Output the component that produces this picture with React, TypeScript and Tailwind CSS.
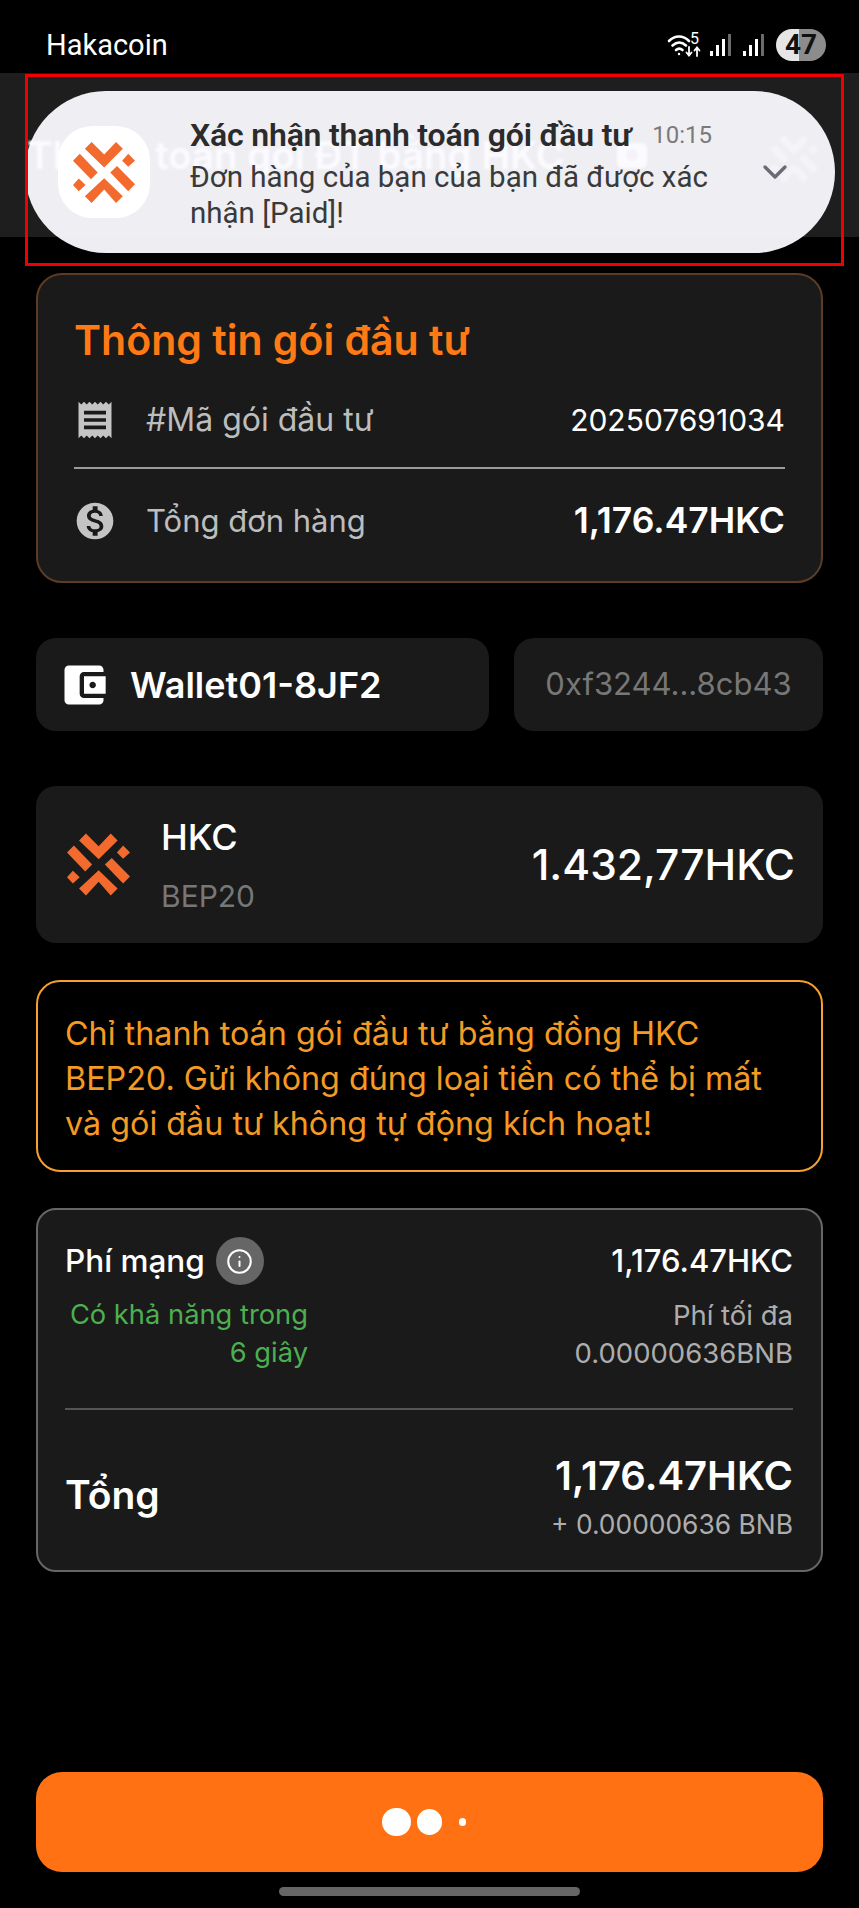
import { ChevronDown, Info } from 'lucide-react'
import { MdAccountBalanceWallet, MdMonetizationOn, MdReceipt } from 'react-icons/md'

function HkcLogo({ className }: { className?: string }) {
  return (
    <svg viewBox="95 105 183 180" className={className} fill="currentColor">
      <polygon points="130,125 150,105 187,142 222,105 242,125 187,180" />
      <polygon points="130,265 187,212 242,265 222,285 187,245 150,285" />
      <polygon points="95,160 115,140 168,195 148,215" />
      <polygon points="205,195 225,176 278,230 258,250" />
      <polygon points="240,160 258,140 278,160 258,178" />
      <polygon points="95,232 112,213 132,232 112,250" />
    </svg>
  )
}

function SignalBars() {
  return (
    <svg width="21" height="22" viewBox="0 0 21 22">
      <rect x="0" y="17" width="3" height="5" fill="#fff" />
      <rect x="6" y="11" width="3" height="11" fill="#fff" />
      <rect x="12" y="5" width="3" height="17" fill="#fff" />
      <rect x="18" y="0" width="3" height="22" fill="#6b6b6b" />
    </svg>
  )
}

function StatusBar() {
  return (
    <div className="h-[73px] flex items-center justify-between pl-[46px] pr-[33px] pt-[17px] bg-black">
      <span className="font-['Roboto',sans-serif] text-[29px] leading-[32px] text-white">Hakacoin</span>
      <div className="flex items-center">
        <svg width="34" height="26" viewBox="0 0 34 26" fill="none" stroke="#fff" strokeWidth="2.6" strokeLinecap="round" className="overflow-visible">
          <path d="M1 9C7 3 15 3 21 9" />
          <path d="M4.5 13.500C9 9.500 13.500 9.500 18 13.500" />
          <path d="M8 18C10 16.200 12.500 16.200 14.500 18" />
          <circle cx="11" cy="22" r="1.200" fill="#fff" stroke="none" />
          <text x="22" y="12" fontSize="16" fill="#fff" stroke="none" fontFamily="Roboto, sans-serif">5</text>
          <path d="M21 15V23M18.500 20.500L21 23.500L23.500 20.500" strokeWidth="1.800" />
          <path d="M29 24V16M26.500 18.500L29 15.500L31.500 18.500" strokeWidth="1.800" />
        </svg>
        <div className="ml-[8px]"><SignalBars /></div>
        <div className="ml-[12px]"><SignalBars /></div>
        <div className="ml-[12px] relative w-[50px] h-[32px] rounded-full overflow-hidden flex">
          <div className="w-[23px] bg-[#e6e6e6]" />
          <div className="flex-1 bg-[#8c8c8c]" />
          <span className="absolute inset-0 flex items-center justify-center font-['Roboto',sans-serif] font-bold text-[28px] leading-none text-[#111]">47</span>
        </div>
      </div>
    </div>
  )
}

function NotificationPill() {
  return (
    <div className="absolute left-[25px] top-[91px] w-[810px] h-[162px] rounded-[81px] bg-[#fafaff]/95 flex items-center font-['Roboto',sans-serif]">
      <div className="ml-[33px] w-[92px] h-[92px] rounded-[34px] bg-white flex items-center justify-center">
        <HkcLogo className="w-[62px] h-[61px] text-[#f26a2e]" />
      </div>
      <div className="ml-[40px] mt-[4px] w-[530px]">
        <div className="w-[522px] flex items-center justify-between">
          <span className="text-[32px] leading-[36px] tracking-[-0.2px] font-semibold text-[#2b2b2b]">Xác nhận thanh toán gói đầu tư</span>
          <span className="text-[24px] leading-[36px] text-[#7a7a7a]">10:15</span>
        </div>
        <p className="mt-[6px] text-[29.5px] leading-[36px] text-[#3a3a3a]">Đơn hàng của bạn của bạn đã được xác nhận [Paid]!</p>
      </div>
      <ChevronDown size={40} strokeWidth={2} className="ml-[35px] text-[#6b6b76]" />
    </div>
  )
}

export default function App() {
  return (
    <div className="relative w-[859px] h-[1908px] overflow-hidden bg-black text-white font-['Inter',sans-serif]">
      <StatusBar />

      {/* header sitting behind the notification */}
      <div className="h-[164px] bg-[#1e1e1e] flex items-center justify-between pl-[27px] pr-[40px]">
        <div className="flex items-center gap-[53px] blur-[1px]">
          <span className="text-[38.500px] leading-[48px] font-semibold">Thanh toán gói ĐT bằng HKC</span>
          <span className="w-[30px] h-[25px] rounded-[6px] bg-white flex items-center justify-center">
            <span className="w-[12px] h-[12px] rounded-full bg-[#777]" />
          </span>
        </div>
        <HkcLogo className="w-[50px] h-[48px] mt-[8px] blur-[1px] text-[#9a8070]" />
      </div>

      <NotificationPill />
      <div className="absolute left-[25px] top-[74px] w-[819px] h-[192px] border-[3px] border-[#f00000]" />

      <main className="px-[36px] pt-[36px]">
        {/* order info */}
        <section className="h-[310px] rounded-[26px] border-2 border-[#5c3c24] bg-[#1a1a1a] px-[36px] pt-[41px]">
          <h2 className="text-[41px] leading-[48px] font-semibold text-[#ff7a14]">Thông tin gói đầu tư</h2>
          <div className="mt-[26px] h-[60px] flex items-center justify-between">
            <div className="flex items-center">
              <MdReceipt size={44} className="-ml-[1px] text-[#c4c4c4]" />
              <span className="ml-[29px] text-[32px] text-[#bdbdbd]">#Mã gói đầu tư</span>
            </div>
            <span className="text-[30px]">202507691034</span>
          </div>
          <div className="mt-[17px] h-[2px] bg-[#9a9a9a]" />
          <div className="mt-[22px] h-[60px] flex items-center justify-between">
            <div className="flex items-center">
              <MdMonetizationOn size={44} className="-ml-[1px] text-[#c4c4c4]" />
              <span className="ml-[29px] text-[31px] text-[#bdbdbd]">Tổng đơn hàng</span>
            </div>
            <span className="text-[35.500px] font-semibold">1,176.47HKC</span>
          </div>
        </section>

        {/* wallet */}
        <div className="mt-[55px] flex gap-[25px]">
          <div className="w-[453px] h-[93px] rounded-[20px] bg-[#1a1a1a] pl-[22px] flex items-center gap-[20px]">
            <MdAccountBalanceWallet size={52} />
            <span className="text-[36px] font-semibold">Wallet01-8JF2</span>
          </div>
          <div className="flex-1 h-[93px] rounded-[20px] bg-[#1a1a1a] flex items-center justify-center">
            <span className="text-[31px] text-[#777]">0xf3244...8cb43</span>
          </div>
        </div>

        {/* token */}
        <div className="mt-[55px] h-[157px] rounded-[20px] bg-[#1a1a1a] pl-[31px] pr-[28px] flex items-center">
          <HkcLogo className="w-[63px] h-[63px] text-[#f26a2e]" />
          <div className="ml-[31px] mt-[3px] flex-1">
            <div className="text-[36px] leading-[44px] font-medium">HKC</div>
            <div className="mt-[15px] text-[30px] leading-[44px] text-[#777]">BEP20</div>
          </div>
          <span className="text-[42.500px] font-medium">1.432,77HKC</span>
        </div>

        {/* warning */}
        <div className="mt-[37px] h-[192px] rounded-[24px] border-2 border-[#f7a02e] px-[27px] pt-[29px] text-[32.300px] leading-[45px] text-[#f59a23]">
          Chỉ thanh toán gói đầu tư bằng đồng HKC BEP20. Gửi không đúng loại tiền có thể bị mất và gói đầu tư không tự động kích hoạt!
        </div>

        {/* fee */}
        <section className="mt-[36px] h-[364px] rounded-[20px] border-2 border-[#666] bg-[#1a1a1a] pl-[27px] pr-[28px] pt-[27px]">
          <div className="flex items-center justify-between">
            <div className="flex items-center gap-[11px]">
              <span className="text-[31.500px] font-medium">Phí mạng</span>
              <span className="w-[48px] h-[48px] rounded-full bg-[#666] flex items-center justify-center">
                <Info size={27} strokeWidth={1.8} />
              </span>
            </div>
            <span className="text-[31px] font-medium">1,176.47HKC</span>
          </div>
          <div className="mt-[11px] flex justify-between leading-[38px]">
            <div className="w-[243px] text-right text-[27.300px] text-[#4caf50]">Có khả năng trong 6 giây</div>
            <div className="text-right text-[27.500px] text-[#adadad]">
              <div>Phí tối đa</div>
              <div>0.00000636BNB</div>
            </div>
          </div>
          <div className="mt-[36px] h-[2px] bg-[#555]" />
          <div className="mt-[42px] flex items-center justify-between">
            <span className="mb-[4px] text-[39px] font-semibold">Tổng</span>
            <div className="text-right">
              <div className="text-[40px] leading-[48px] font-semibold">1,176.47HKC</div>
              <div className="mt-[6px] text-[26.400px] leading-[36px] text-[#adadad]">+ 0.00000636 BNB</div>
            </div>
          </div>
        </section>

        {/* submit, showing loading dots */}
        <button className="mt-[200px] w-full h-[100px] rounded-[26px] bg-[#ff7112] flex items-center justify-center pr-[11px]">
          <span className="w-[29px] h-[28px] rounded-full bg-white" />
          <span className="ml-[6px] w-[25px] h-[26px] rounded-full bg-white" />
          <span className="ml-[17px] w-[7px] h-[8px] rounded-full bg-white" />
        </button>
      </main>

      <div className="mt-[15px] mx-auto w-[301px] h-[9px] rounded-full bg-[#666]" />
    </div>
  )
}
